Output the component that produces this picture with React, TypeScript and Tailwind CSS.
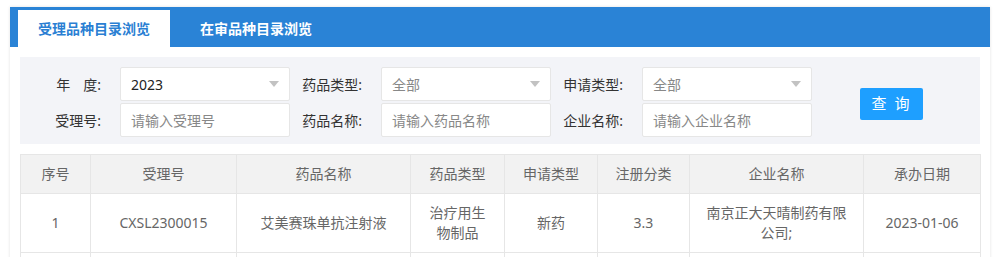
const FONT = { fontFamily: '"Noto Sans", "Noto Sans CJK SC", sans-serif' };

const COLS = [
  { title: "序号", w: 70 },
  { title: "受理号", w: 146 },
  { title: "药品名称", w: 174 },
  { title: "药品类型", w: 94 },
  { title: "申请类型", w: 93 },
  { title: "注册分类", w: 92 },
  { title: "企业名称", w: 174 },
  { title: "承办日期", w: 117 },
];

const ROWS = [
  ["1", "CXSL2300015", "艾美赛珠单抗注射液", "治疗用生物制品", "新药", "3.3", "南京正大天晴制药有限公司;", "2023-01-06"],
];

function Arrow() {
  return (
    <svg width="10" height="6" viewBox="0 0 10 6" className="shrink-0">
      <path d="M0 0 L10 0 L5 6 Z" fill="#c2c2c2" />
    </svg>
  );
}

function Select({ value, dark }: { value: string; dark?: boolean }) {
  return (
    <div className="h-[34px] bg-white border border-[#e6e6e6] rounded-[2px] flex items-center justify-between pl-[10px] pr-[10px]">
      <span className={dark ? "text-[#222]" : "text-[#888]"}>{value}</span>
      <Arrow />
    </div>
  );
}

function Input({ placeholder }: { placeholder: string }) {
  return (
    <div className="h-[34px] bg-white border border-[#e6e6e6] rounded-[2px] flex items-center pl-[10px]">
      <span className="text-[#888]">{placeholder}</span>
    </div>
  );
}

function Label({ children }: { children: React.ReactNode }) {
  return <div className="h-[34px] flex items-center justify-end pr-[19px] text-[#333]">{children}</div>;
}

export default function App() {
  return (
    <div style={FONT} className="h-[257px] overflow-hidden bg-white pt-[7px] text-[14px]">
      <div className="ml-[10px] w-[980px] bg-white shadow-[0_0_3px_rgba(0,0,0,0.12)]">
        <div className="h-[40px] bg-[#2a83d6] flex items-end pl-[8px] gap-[10px]">
          <div className="h-[37px] px-[20px] bg-white flex items-center font-bold text-[#2a7fd3]">受理品种目录浏览</div>
          <div className="h-[37px] px-[20px] flex items-center font-bold text-white">在审品种目录浏览</div>
        </div>

        <div className="p-[10px]">
          <div className="bg-[#f3f4f8] pt-[10px] pb-[7px] pl-[9px] flex items-center">
            <div className="grid grid-cols-[91px_170px_91px_170px_91px_170px] gap-y-[2px]">
              <Label>
                年<span className="inline-block w-[13px]" />度:
              </Label>
              <Select value="2023" dark />
              <Label>药品类型:</Label>
              <Select value="全部" />
              <Label>申请类型:</Label>
              <Select value="全部" />
              <Label>受理号:</Label>
              <Input placeholder="请输入受理号" />
              <Label>药品名称:</Label>
              <Input placeholder="请输入药品名称" />
              <Label>企业名称:</Label>
              <Input placeholder="请输入企业名称" />
            </div>
            <button className="ml-[48px] mt-[3px] w-[63px] h-[32px] rounded-[2px] bg-[#1e9fff] text-white text-[15px] flex items-center justify-center tracking-[2px]">
              查 询
            </button>
          </div>

          <table className="mt-[10px] w-[960px] table-fixed border-collapse text-[#666]">
            <colgroup>
              {COLS.map((c) => (
                <col key={c.title} style={{ width: c.w }} />
              ))}
            </colgroup>
            <thead>
              <tr className="bg-[#f2f2f2]">
                {COLS.map((c) => (
                  <th key={c.title} className="border border-[#e6e6e6] px-[15px] py-[9px] leading-[20px] font-normal text-center">
                    {c.title}
                  </th>
                ))}
              </tr>
            </thead>
            <tbody>
              {ROWS.map((r, i) => (
                <tr key={i}>
                  {r.map((v, j) => (
                    <td key={j} className="border border-[#e6e6e6] px-[15px] py-[9px] leading-[20px] text-center break-all">
                      {v}
                    </td>
                  ))}
                </tr>
              ))}
              <tr>
                {COLS.map((c) => (
                  <td key={c.title} className="border border-[#e6e6e6] h-[40px]" />
                ))}
              </tr>
            </tbody>
          </table>
        </div>
      </div>
    </div>
  );
}
